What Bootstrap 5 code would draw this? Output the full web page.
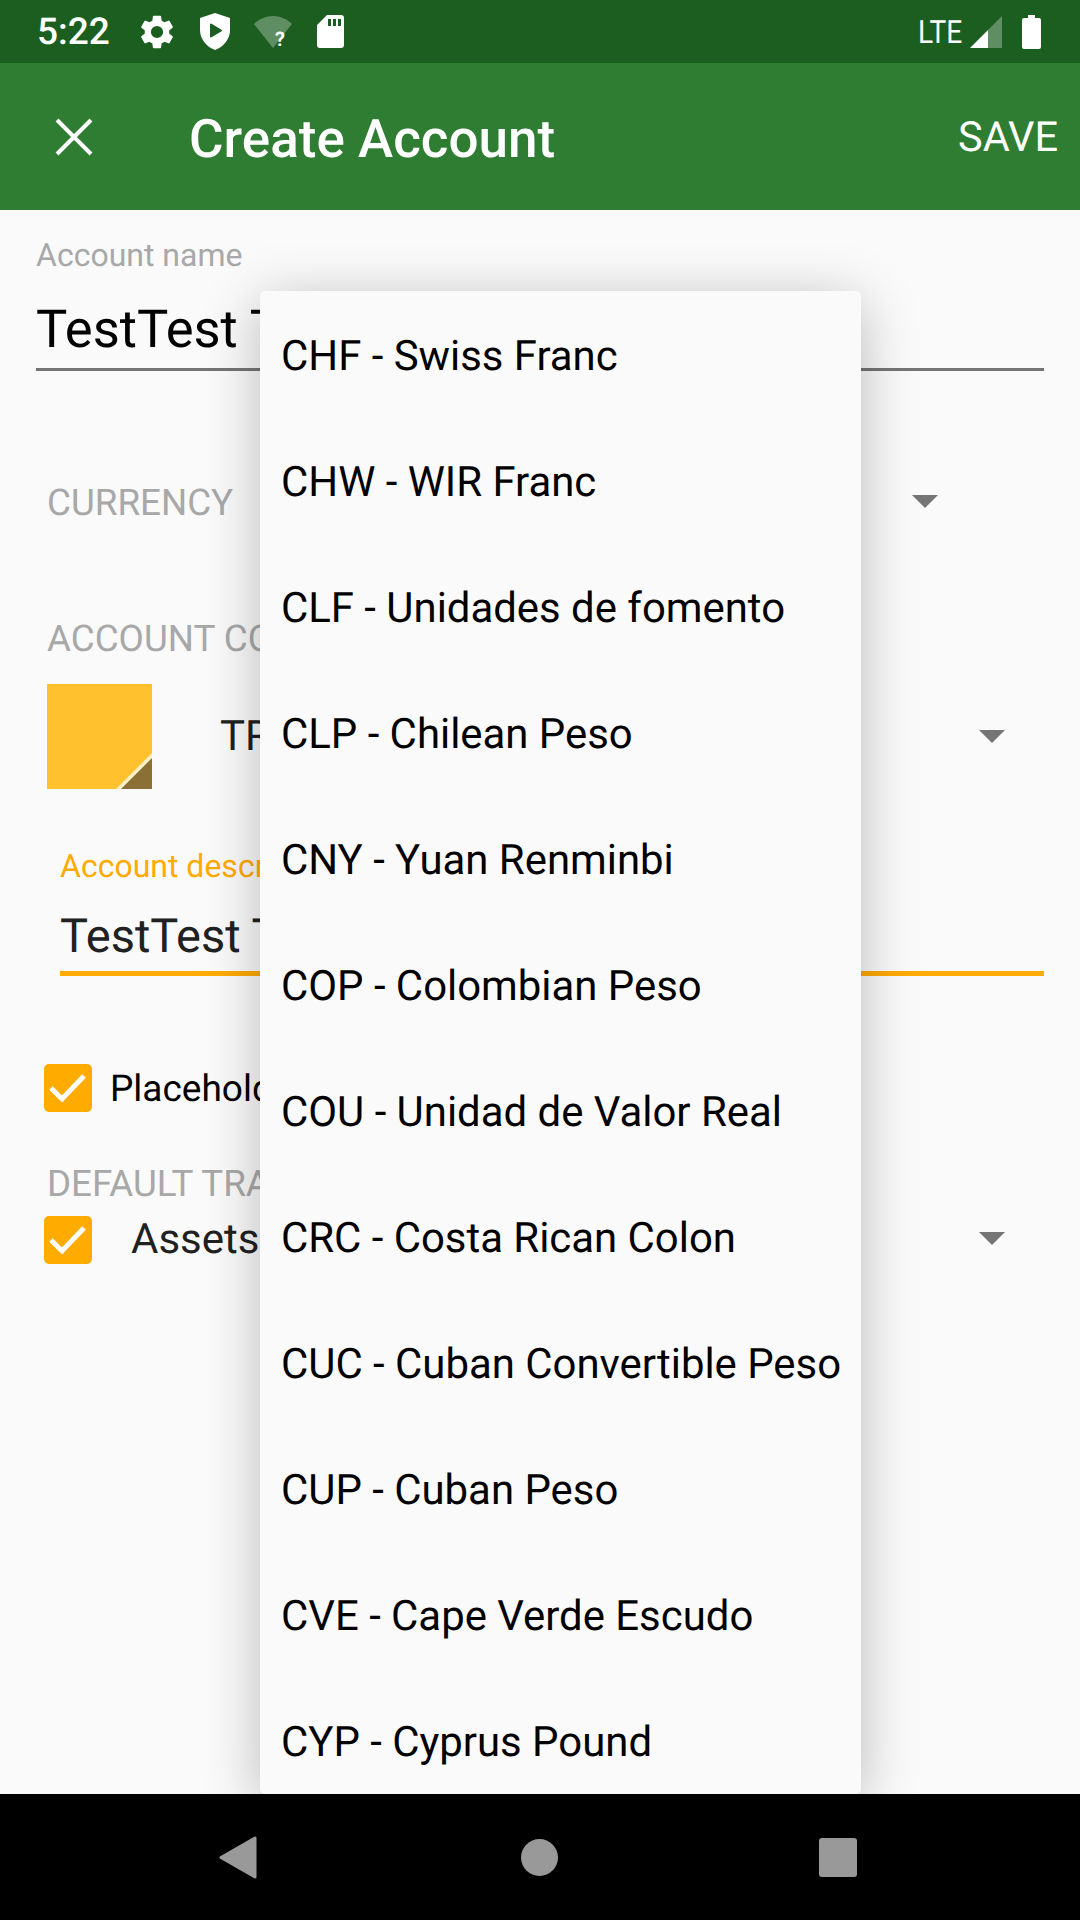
<!DOCTYPE html>
<html lang="en">
<head>
  <meta charset="UTF-8" />
  <meta name="viewport" content="width=device-width, initial-scale=1.0"/>
  <title>Create Account</title>
  <link href="https://cdn.jsdelivr.net/npm/bootstrap@5.3.3/dist/css/bootstrap.min.css" rel="stylesheet">
  <script src="https://cdn.jsdelivr.net/npm/bootstrap@5.3.3/dist/js/bootstrap.bundle.min.js"></script>
  <style>
    body {
      font-family: Roboto, "Liberation Sans", sans-serif;
      background-color: #fafafa;
      color: #212121;
      width: 1080px;
      height: 1920px;
      overflow: hidden;
      text-rendering: geometricPrecision;
    }

    .status-bar {
      height: 63px;
      flex: none;
      background-color: #1b5e20;
      color: #fff;
      padding: 0 39px 0 37px;
    }
    .status-time { font-size: 37px; font-weight: 500; width: 104px; line-height: 1; padding-top: 1px; }
    .status-lte { font-size: 32px; line-height: 1; margin-right: 8px; transform: scaleX(.88); transform-origin: right center; }
    .status-shield { margin-left: 27px; }
    .status-wifi { margin-left: 24px; margin-top: 4px; }
    .status-sd { margin-left: 25px; }
    .status-battery { margin-left: 20px; }

    .app-bar {
      height: 147px;
      flex: none;
      background-color: #2e7d32;
      color: #fff;
    }
    .close-icon { margin-left: 54px; width: 40px; height: 40px; }
    .app-title { font-size: 53px; font-weight: 500; margin-left: 95px; line-height: 1; padding-top: 5px; }
    .app-save { font-size: 41.5px; margin-right: 22px; line-height: 1; padding-top: 2px; }

    .form-area { flex: 1; min-height: 0; padding: 0 36px; }

    .float-label { font-size: 32px; line-height: 38px; color: #a8a8a8; }
    .name-label { margin-top: 26px; }
    .text-value { font-size: 52.5px; line-height: 62px; }
    .name-value { margin-top: 24px; color: #000; }
    .name-rule { height: 3px; background-color: #757575; margin-top: 8px; }

    .section-label { font-size: 36.75px; line-height: 42px; color: #a8a8a8; margin-left: 11px; }
    .currency-row { margin-top: 111px; height: 42px; }
    .caret-down {
      width: 0;
      height: 0;
      border-left: 13px solid transparent;
      border-right: 13px solid transparent;
      border-top: 13px solid #757575;
    }
    .currency-caret { margin-left: 876px; margin-top: -4px; }
    .color-label { margin-top: 94px; }
    .color-row { margin-left: 11px; margin-top: 24px; height: 105px; }
    .color-swatch { width: 105px; height: 105px; flex: none; display: block; }
    .color-name { font-size: 42px; margin-left: 68px; line-height: 50px; color: #212121; }
    .color-caret { margin-left: 932px; }
    .default-caret { margin-left: 943px; margin-top: -3px; }

    .desc-block { margin-left: 24px; margin-top: 58px; }
    .desc-label { color: #ffab00; }
    .desc-value { font-size: 47px; margin-top: 21px; }
    .desc-rule { height: 5px; background-color: #ffab00; margin-top: 3px; }

    .check-box {
      width: 48px;
      height: 48px;
      flex: none;
      border-radius: 5px;
      background-color: #ffab00;
      margin-left: 8px;
    }
    .placeholder-row { margin-top: 88px; height: 48px; }
    .placeholder-text { font-size: 37px; color: #000; margin-left: 18px; line-height: 48px; padding-top: 3px; }
    .default-label { margin-top: 51px; }
    .default-row { margin-top: 11px; }
    .assets-text { font-size: 42px; margin-left: 39px; line-height: 48px; }

    .nav-bar {
      height: 126px;
      flex: none;
      background-color: #000;
      z-index: 5;
    }
    .nav-back { position: relative; left: -302px; }
    .nav-home { width: 37px; height: 37px; border-radius: 50%; background-color: #999; position: absolute; left: 521px; }
    .nav-recent { width: 38px; height: 39px; border-radius: 3px; background-color: #999; position: absolute; left: 819px; }

    .currency-popup {
      position: absolute;
      left: 260px;
      top: 291px;
      width: 601px;
      height: 1503px;
      background-color: #fafafa;
      border-radius: 5px;
      overflow: hidden;
      box-shadow: 0 10px 56px rgba(0, 0, 0, .26);
      z-index: 3;
    }
    .currency-popup .list-group-item {
      background-color: transparent;
      border: 0;
      padding: 0 0 0 21px;
      height: 126px;
      line-height: 132px;
      font-size: 41.9px;
      color: #000;
      white-space: nowrap;
    }
  </style>
</head>
<body class="position-relative">

  <div class="d-flex flex-column h-100">
    <!-- Statusleiste -->
    <div class="status-bar d-flex align-items-center">
      <span class="status-time">5:22</span>
      <svg width="32" height="34" viewBox="2.6 2 18.8 20" preserveAspectRatio="none" fill="#fff"><path d="M19.14 12.94c.04-.3.06-.61.06-.94s-.02-.64-.07-.94l2.03-1.58a.5.5 0 0 0 .12-.61l-1.92-3.32a.5.5 0 0 0-.59-.22l-2.39.96c-.5-.38-1.03-.7-1.62-.94l-.36-2.54a.48.48 0 0 0-.48-.41h-3.84a.47.47 0 0 0-.47.41l-.36 2.54c-.59.24-1.13.57-1.62.94l-2.39-.96a.49.49 0 0 0-.59.22L2.74 8.87a.47.47 0 0 0 .12.61l2.03 1.58c-.05.3-.09.63-.09.94s.02.64.07.94l-2.03 1.58a.5.5 0 0 0-.12.61l1.92 3.32c.12.22.37.29.59.22l2.39-.96c.5.38 1.03.7 1.62.94l.36 2.54c.05.24.24.41.48.41h3.84c.24 0 .44-.17.47-.41l.36-2.54c.59-.24 1.13-.56 1.62-.94l2.39.96c.22.08.47 0 .59-.22l1.92-3.32a.47.47 0 0 0-.12-.61l-2.01-1.58zM12 15.6a3.6 3.6 0 1 1 0-7.2 3.6 3.6 0 0 1 0 7.2z"/></svg>
      <svg class="status-shield" width="30" height="37" viewBox="0 0 30 37"><path fill="#fff" d="M15 0l15 5v12c0 9-6 16.5-15 20C6 33.5 0 26 0 17V5z"/><path fill="#1b5e20" stroke="#1b5e20" stroke-width="2" stroke-linejoin="round" d="M11 11.5v12l10-6z"/></svg>
      <svg class="status-wifi" width="38" height="36" viewBox="0 0 38 36"><path fill="#fff" fill-opacity=".3" d="M0 8c5-5 12-8 19-8s14 3 19 8L19 32z"/><text x="21" y="30" font-family="Roboto" font-size="20" font-weight="700" fill="#fff">?</text></svg>
      <svg class="status-sd" width="27" height="33" viewBox="0 0 27 33"><path fill="#fff" fill-rule="evenodd" d="M10 0h14a3 3 0 0 1 3 3v27a3 3 0 0 1-3 3H3a3 3 0 0 1-3-3V10zM11 4v7h3V4zm5 0v7h3V4zm5 0v7h3V4z"/></svg>
      <span class="status-lte ms-auto">LTE</span>
      <svg width="32" height="32" viewBox="0 0 32 32"><path fill="#fff" fill-opacity=".3" d="M32 0v32H18V14z"/><path fill="#fff" d="M0 32 18 14v18z"/></svg>
      <svg class="status-battery" width="19" height="34" viewBox="0 0 19 34"><path fill="#fff" d="M6 0h7v3h4a2 2 0 0 1 2 2v27a2 2 0 0 1-2 2H2a2 2 0 0 1-2-2V5a2 2 0 0 1 2-2h4z"/></svg>
    </div>

    <!-- Toolbar -->
    <div class="app-bar d-flex align-items-center">
      <svg class="close-icon" viewBox="0 0 40 40"><path stroke="#fff" stroke-width="4" d="M3 3l34 34M37 3 3 37"/></svg>
      <span class="app-title">Create Account</span>
      <span class="app-save ms-auto">SAVE</span>
    </div>

    <!-- Formular -->
    <div class="form-area">
      <div class="float-label name-label">Account name</div>
      <div class="text-value name-value">TestTest Test</div>
      <div class="name-rule"></div>

      <div class="currency-row d-flex align-items-center position-relative">
        <span class="section-label">CURRENCY</span>
        <span class="caret-down position-absolute currency-caret"></span>
      </div>

      <div class="section-label color-label">ACCOUNT COLOR</div>
      <div class="color-row d-flex align-items-center position-relative">
        <svg class="color-swatch" viewBox="0 0 105 105">
          <rect width="105" height="105" fill="#ffc12e"/>
          <path d="M105 69v36H69z" fill="#fff1c8"/>
          <path d="M105 74v31H74z" fill="#8a7034"/>
        </svg>
        <span class="color-name">TRANSPARENT</span>
        <span class="caret-down position-absolute color-caret"></span>
      </div>

      <div class="desc-block">
        <div class="float-label desc-label">Account description</div>
        <div class="text-value desc-value">TestTest Test</div>
        <div class="desc-rule"></div>
      </div>

      <div class="placeholder-row d-flex align-items-center">
        <div class="check-box d-flex align-items-center justify-content-center">
          <svg width="38" height="30" viewBox="0 0 38 30"><path fill="none" stroke="#fff" stroke-width="5" d="M2 15l11 11L35 3"/></svg>
        </div>
        <span class="placeholder-text">Placeholder account</span>
      </div>

      <div class="section-label default-label">DEFAULT TRANSFER ACCOUNT</div>
      <div class="default-row d-flex align-items-center position-relative">
        <div class="check-box d-flex align-items-center justify-content-center">
          <svg width="38" height="30" viewBox="0 0 38 30"><path fill="none" stroke="#fff" stroke-width="5" d="M2 15l11 11L35 3"/></svg>
        </div>
        <span class="assets-text">Assets</span>
        <span class="caret-down position-absolute default-caret"></span>
      </div>
    </div>

    <!-- Navigation -->
    <div class="nav-bar position-relative d-flex align-items-center justify-content-center">
      <svg class="nav-back" width="38" height="43" viewBox="0 0 38 43"><path fill="#999" stroke="#999" stroke-width="3" stroke-linejoin="round" d="M36 2v39L2 21.5z"/></svg>
      <span class="nav-home"></span>
      <span class="nav-recent"></span>
    </div>
  </div>

  <!-- Waehrungsauswahl -->
  <div class="currency-popup">
    <div class="list-group list-group-flush rounded-0">
      <div class="list-group-item">CHF - Swiss Franc</div>
      <div class="list-group-item">CHW - WIR Franc</div>
      <div class="list-group-item">CLF - Unidades de fomento</div>
      <div class="list-group-item">CLP - Chilean Peso</div>
      <div class="list-group-item">CNY - Yuan Renminbi</div>
      <div class="list-group-item">COP - Colombian Peso</div>
      <div class="list-group-item">COU - Unidad de Valor Real</div>
      <div class="list-group-item">CRC - Costa Rican Colon</div>
      <div class="list-group-item">CUC - Cuban Convertible Peso</div>
      <div class="list-group-item">CUP - Cuban Peso</div>
      <div class="list-group-item">CVE - Cape Verde Escudo</div>
      <div class="list-group-item">CYP - Cyprus Pound</div>
    </div>
  </div>

</body>
</html>
